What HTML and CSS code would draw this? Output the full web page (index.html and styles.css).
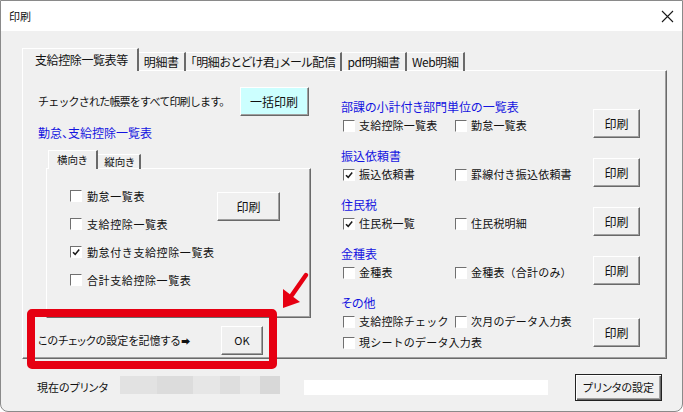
FILE: index.html
```html
<!DOCTYPE html>
<html lang="ja">
<head>
<meta charset="utf-8">
<title>印刷</title>
<link rel="stylesheet" href="styles.css">
</head>
<body>
<div class="window">
  <div class="titlebar">
    <span class="title">印刷</span>
    <svg class="close" viewBox="0 0 13 13" width="13" height="13"><path d="M1 1L12 12M12 1L1 12" stroke="#1a1a1a" stroke-width="1.1" fill="none"/></svg>
  </div>
  <div class="main">
    <div class="tabs">
      <div class="tab tab-active">支給控除一覧表等</div>
      <div class="tab">明細書</div>
      <div class="tab">「明細おとどけ君」メール配信</div>
      <div class="tab">pdf明細書</div>
      <div class="tab">Web明細</div>
    </div>
    <div class="panel">
      <div class="col-left">
        <div class="row-all">
          <span class="all-label">チェックされた帳票をすべて印刷します。</span>
          <button class="btn btn-cyan">一括印刷</button>
        </div>
        <div class="heading">勤怠、支給控除一覧表</div>
        <div class="subtabs">
          <div class="subtab subtab-active">横向き</div>
          <div class="subtab">縦向き</div>
        </div>
        <div class="subpanel">
          <div class="checklist">
            <div class="chk"><span class="box"></span><span class="lbl">勤怠一覧表</span></div>
            <div class="chk"><span class="box"></span><span class="lbl">支給控除一覧表</span></div>
            <div class="chk"><span class="box"><svg viewBox="0 0 10 10" width="10" height="10"><path d="M2 5.2L4.2 7.4L8.2 2.6" stroke="#1a1a1a" stroke-width="1.6" fill="none"/></svg></span><span class="lbl">勤怠付き支給控除一覧表</span></div>
            <div class="chk"><span class="box"></span><span class="lbl">合計支給控除一覧表</span></div>
          </div>
          <button class="btn btn-print-wide">印刷</button>
        </div>
        <div class="row-remember">
          <span class="remember-label">このチェックの設定を記憶する<span class="arrow-glyph">➡</span></span>
          <button class="btn btn-ok">OK</button>
        </div>
      </div>
      <div class="col-right">
        <div class="group">
          <div class="group-main">
            <div class="heading">部課の小計付き部門単位の一覧表</div>
            <div class="chk-row">
              <div class="chk chk-col"><span class="box"></span><span class="lbl">支給控除一覧表</span></div>
              <div class="chk"><span class="box"></span><span class="lbl">勤怠一覧表</span></div>
            </div>
          </div>
          <button class="btn btn-print">印刷</button>
        </div>
        <div class="group">
          <div class="group-main">
            <div class="heading">振込依頼書</div>
            <div class="chk-row">
              <div class="chk chk-col"><span class="box"><svg viewBox="0 0 10 10" width="10" height="10"><path d="M2 5.2L4.2 7.4L8.2 2.6" stroke="#1a1a1a" stroke-width="1.6" fill="none"/></svg></span><span class="lbl">振込依頼書</span></div>
              <div class="chk"><span class="box"></span><span class="lbl">罫線付き振込依頼書</span></div>
            </div>
          </div>
          <button class="btn btn-print">印刷</button>
        </div>
        <div class="group">
          <div class="group-main">
            <div class="heading">住民税</div>
            <div class="chk-row">
              <div class="chk chk-col"><span class="box"><svg viewBox="0 0 10 10" width="10" height="10"><path d="M2 5.2L4.2 7.4L8.2 2.6" stroke="#1a1a1a" stroke-width="1.6" fill="none"/></svg></span><span class="lbl">住民税一覧</span></div>
              <div class="chk"><span class="box"></span><span class="lbl">住民税明細</span></div>
            </div>
          </div>
          <button class="btn btn-print">印刷</button>
        </div>
        <div class="group">
          <div class="group-main">
            <div class="heading">金種表</div>
            <div class="chk-row">
              <div class="chk chk-col"><span class="box"></span><span class="lbl">金種表</span></div>
              <div class="chk"><span class="box"></span><span class="lbl">金種表（合計のみ）</span></div>
            </div>
          </div>
          <button class="btn btn-print">印刷</button>
        </div>
        <div class="group group-last">
          <div class="group-main">
            <div class="heading">その他</div>
            <div class="chk-row">
              <div class="chk chk-col"><span class="box"></span><span class="lbl">支給控除チェック</span></div>
              <div class="chk"><span class="box"></span><span class="lbl">次月のデータ入力表</span></div>
            </div>
            <div class="chk-row">
              <div class="chk chk-col"><span class="box"></span><span class="lbl">現シートのデータ入力表</span></div>
            </div>
          </div>
          <button class="btn btn-print btn-print-low">印刷</button>
        </div>
      </div>
    </div>
    <div class="footer">
      <span class="printer-label">現在のプリンタ</span>
      <div class="printer-blur"></div>
      <div class="printer-white"></div>
      <button class="btn btn-default">プリンタの設定</button>
    </div>
  </div>
  <div class="annot-box"></div>
  <svg class="annot-arrow" viewBox="0 0 36 42" width="36" height="42">
    <path d="M30 5L16 25" stroke="#e60012" stroke-width="4.5" stroke-linecap="round" fill="none"/>
    <polygon points="7,38 7,19 24,32" fill="#e60012"/>
  </svg>
</div>
</body>
</html>
```

FILE: styles.css
```css
* { box-sizing: border-box; margin: 0; padding: 0; }
html, body { width: 683px; height: 412px; overflow: hidden; background: #ffffff; }
body {
  font-family: "Noto Sans CJK JP", "Noto Sans", "DejaVu Sans", sans-serif;
  font-size: 12px;
  color: #111;
  line-height: 1;
}

.window {
  position: relative;
  width: 683px;
  height: 412px;
  background: #f0f0f0;
  border: 1px solid #8a8a8a;
  border-radius: 0 0 8px 8px;
  display: flex;
  flex-direction: column;
  overflow: hidden;
}

.titlebar {
  flex: none;
  height: 30px;
  background: #ffffff;
  display: flex;
  align-items: center;
  padding: 0 8px 0 8px;
}
.title { font-size: 11px; font-feature-settings: "palt"; }
.close { margin-left: auto; display: block; }

.main {
  flex: 1;
  display: flex;
  flex-direction: column;
  padding: 17px 15px 0 21px;
}

/* main tabs */
.tabs {
  display: flex;
  align-items: flex-end;
  height: 23px;
  margin-bottom: -1px;
  position: relative;
  z-index: 1;
}
.tab {
  height: 19px;
  padding: 0 5px 0 5px;
  border-top: 1px solid #ffffff;
  border-right: 2px solid #6a6a6a;
  display: flex;
  align-items: center;
  font-size: 12px;
  letter-spacing: -0.4px;
  font-feature-settings: "palt";
  white-space: nowrap;
}
.tab-active {
  height: 23px;
  padding: 0 9px 0 12px;
  border-left: 1px solid #ffffff;
  background: #f0f0f0;
}

.panel {
  height: 289px;
  border: 1px solid;
  border-color: #ffffff #6a6a6a #6a6a6a #ffffff;
  box-shadow: inset -1px -1px 0 #a0a0a0;
  display: grid;
  grid-template-columns: 318px 1fr;
}

/* left column */
.col-left { padding: 16px 0 0 15px; }
.row-all { display: flex; align-items: center; height: 29px; }
.all-label { font-size: 11px; letter-spacing: -0.8px; white-space: nowrap; }
.heading {
  color: #1414e0;
  font-size: 12px;
  line-height: 18px;
  font-feature-settings: "palt";
  white-space: nowrap;
}
.col-left .heading { margin-top: 8px; }

.btn {
  font-family: inherit;
  color: #111;
  background: #f0f0f0;
  border: 1px solid;
  border-color: #ffffff #696969 #696969 #ffffff;
  box-shadow: inset -1px -1px 0 #a0a0a0;
  display: flex;
  align-items: center;
  justify-content: center;
  font-size: 12px;
  line-height: 1;
  font-feature-settings: "palt";
}
.btn-cyan { margin-left: 10px; width: 69px; height: 29px; background: #ccffff; }

.subtabs {
  display: flex;
  align-items: flex-end;
  height: 19px;
  margin: 8px 0 -1px 10px;
  position: relative;
  z-index: 1;
}
.subtab {
  height: 15px;
  padding: 0 5px 0 6px;
  border-top: 1px solid #ffffff;
  border-right: 2px solid #6a6a6a;
  display: flex;
  align-items: center;
  font-size: 10.5px;
  font-feature-settings: "palt";
}
.subtab-active {
  height: 19px;
  padding: 0 9px 0 8px;
  border-left: 1px solid #ffffff;
  background: #f0f0f0;
}

.subpanel {
  margin-left: 8px;
  width: 265px;
  height: 150px;
  border: 1px solid;
  border-color: #ffffff #6a6a6a #6a6a6a #ffffff;
  box-shadow: inset -1px -1px 0 #a0a0a0;
  display: flex;
}
.checklist { width: 170px; padding: 13px 0 0 23px; }
.checklist .chk { height: 28px; }
.btn-print-wide { margin-top: 23px; width: 63px; height: 29px; }

.row-remember { display: flex; align-items: center; height: 29px; margin-top: 8px; }
.remember-label { width: 183px; font-size: 11px; font-feature-settings: "palt"; white-space: nowrap; }
.arrow-glyph { font-size: 9px; margin-left: 1px; }
.btn-ok { width: 42px; height: 29px; font-size: 11px; }

/* checkboxes */
.chk { display: flex; align-items: center; white-space: nowrap; }
.box {
  width: 12px;
  height: 12px;
  flex: none;
  background: #ffffff;
  border: 1px solid;
  border-color: #707070 #ffffff #ffffff #707070;
  display: flex;
  align-items: center;
  justify-content: center;
}
.box svg { display: block; }
.lbl { margin-left: 5px; font-size: 11px; letter-spacing: 0.6px; }
.col-right .lbl { margin-left: 4px; letter-spacing: 0.2px; }

/* right column */
.col-right { padding: 27px 26px 0 0; }
.group { display: flex; height: 49px; }
.group-last { height: auto; }
.group-main { flex: 1; }
.chk-row { display: flex; align-items: center; height: 19px; }
.chk-row + .chk-row { margin-top: 2px; }
.chk-col { width: 114px; padding-left: 2px; }
.btn-print { margin-top: 11px; width: 47px; height: 29px; flex: none; }
.btn-print-low { margin-top: 24px; }

/* footer */
.footer { display: flex; align-items: center; height: 27px; margin-top: 15px; }
.printer-label { width: 98px; padding-left: 15px; font-size: 11px; font-feature-settings: "palt"; white-space: nowrap; }
.printer-blur {
  align-self: flex-start;
  margin-top: 2px;
  width: 160px;
  height: 18px;
  background: linear-gradient(to right,
    #e2e2e2 0, #e2e2e2 37px,
    #dcdcdc 37px, #dcdcdc 73px,
    #e6e6e6 73px, #e6e6e6 100px,
    #dedede 100px, #dedede 120px,
    #e8e8e8 120px, #e8e8e8 140px,
    #d8d8d8 140px, #d8d8d8 160px);
}
.printer-white { margin-left: 24px; width: 244px; height: 15px; background: #ffffff; }
.btn-default {
  margin-left: auto;
  margin-right: 5px;
  width: 87px;
  height: 27px;
  font-size: 11px;
  border: 1px solid #222222;
  box-shadow: inset 1px 1px 0 #ffffff, inset -1px -1px 0 #696969, inset -2px -2px 0 #a0a0a0;
}

/* annotations */
.annot-box {
  position: absolute;
  left: 26px;
  top: 308px;
  width: 250px;
  height: 60px;
  border: 8px solid #e60012;
  border-radius: 5px;
}
.annot-arrow {
  position: absolute;
  left: 275px;
  top: 269px;
}
```
